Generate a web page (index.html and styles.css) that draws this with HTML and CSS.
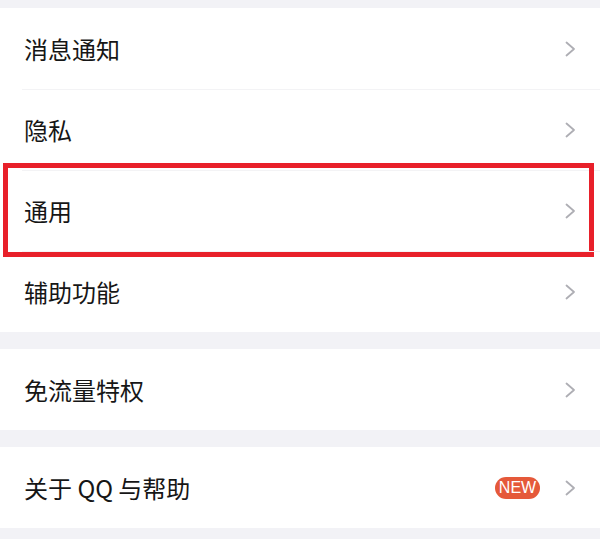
FILE: index.html
```html
<!DOCTYPE html>
<html lang="zh">
<head>
<meta charset="utf-8">
<link rel="stylesheet" href="styles.css">
</head>
<body>
<div class="page">
  <div class="group">
    <div class="row"><span class="label">消息通知</span><svg class="chev" viewBox="0 0 11 16"><polyline points="1.5,1.5 9,8 1.5,14.5"/></svg></div>
    <div class="row"><span class="label">隐私</span><svg class="chev" viewBox="0 0 11 16"><polyline points="1.5,1.5 9,8 1.5,14.5"/></svg></div>
    <div class="row highlighted"><span class="label">通用</span><svg class="chev" viewBox="0 0 11 16"><polyline points="1.5,1.5 9,8 1.5,14.5"/></svg><div class="mark"></div></div>
    <div class="row"><span class="label">辅助功能</span><svg class="chev" viewBox="0 0 11 16"><polyline points="1.5,1.5 9,8 1.5,14.5"/></svg></div>
  </div>
  <div class="group">
    <div class="row"><span class="label">免流量特权</span><svg class="chev" viewBox="0 0 11 16"><polyline points="1.5,1.5 9,8 1.5,14.5"/></svg></div>
  </div>
  <div class="group">
    <div class="row"><span class="label">关于 QQ 与帮助</span><span class="badge">NEW</span><svg class="chev" viewBox="0 0 11 16"><polyline points="1.5,1.5 9,8 1.5,14.5"/></svg></div>
  </div>
</div>
</body>
</html>
```
FILE: styles.css
```css
html, body {
  margin: 0;
  padding: 0;
  background: #f2f2f6;
}
.page {
  width: 600px;
  height: 539px;
  padding-top: 8px;
  box-sizing: border-box;
  display: flex;
  flex-direction: column;
  gap: 17px;
  font-family: "Noto Sans CJK SC", "Noto Sans", sans-serif;
  overflow: hidden;
}
.group {
  background: #ffffff;
  display: flex;
  flex-direction: column;
}
.row {
  position: relative;
  height: 81px;
  display: flex;
  align-items: center;
  padding: 0 24px 0 24px;
  box-sizing: border-box;
}
.row + .row::before {
  content: "";
  position: absolute;
  top: 0;
  left: 22px;
  right: 0;
  height: 1px;
  background: #f3f3f5;
}
.label {
  flex: 1;
  font-size: 24px;
  color: #161616;
  line-height: 1;
}
.chev {
  width: 11px;
  height: 16px;
  fill: none;
  stroke: #aeaeb4;
  stroke-width: 1.8;
  stroke-linecap: round;
  stroke-linejoin: round;
}
.badge {
  width: 45px;
  height: 22px;
  border-radius: 11px;
  background: #e5593a;
  color: #ffffff;
  font-family: "Liberation Sans", Arial, sans-serif;
  font-size: 16px;
  line-height: 22px;
  text-align: center;
  margin-right: 25px;
}
.mark {
  position: absolute;
  top: -7px;
  left: 3px;
  right: 6px;
  bottom: -6px;
  border: 5px solid #e8202a;
  pointer-events: none;
}
```
